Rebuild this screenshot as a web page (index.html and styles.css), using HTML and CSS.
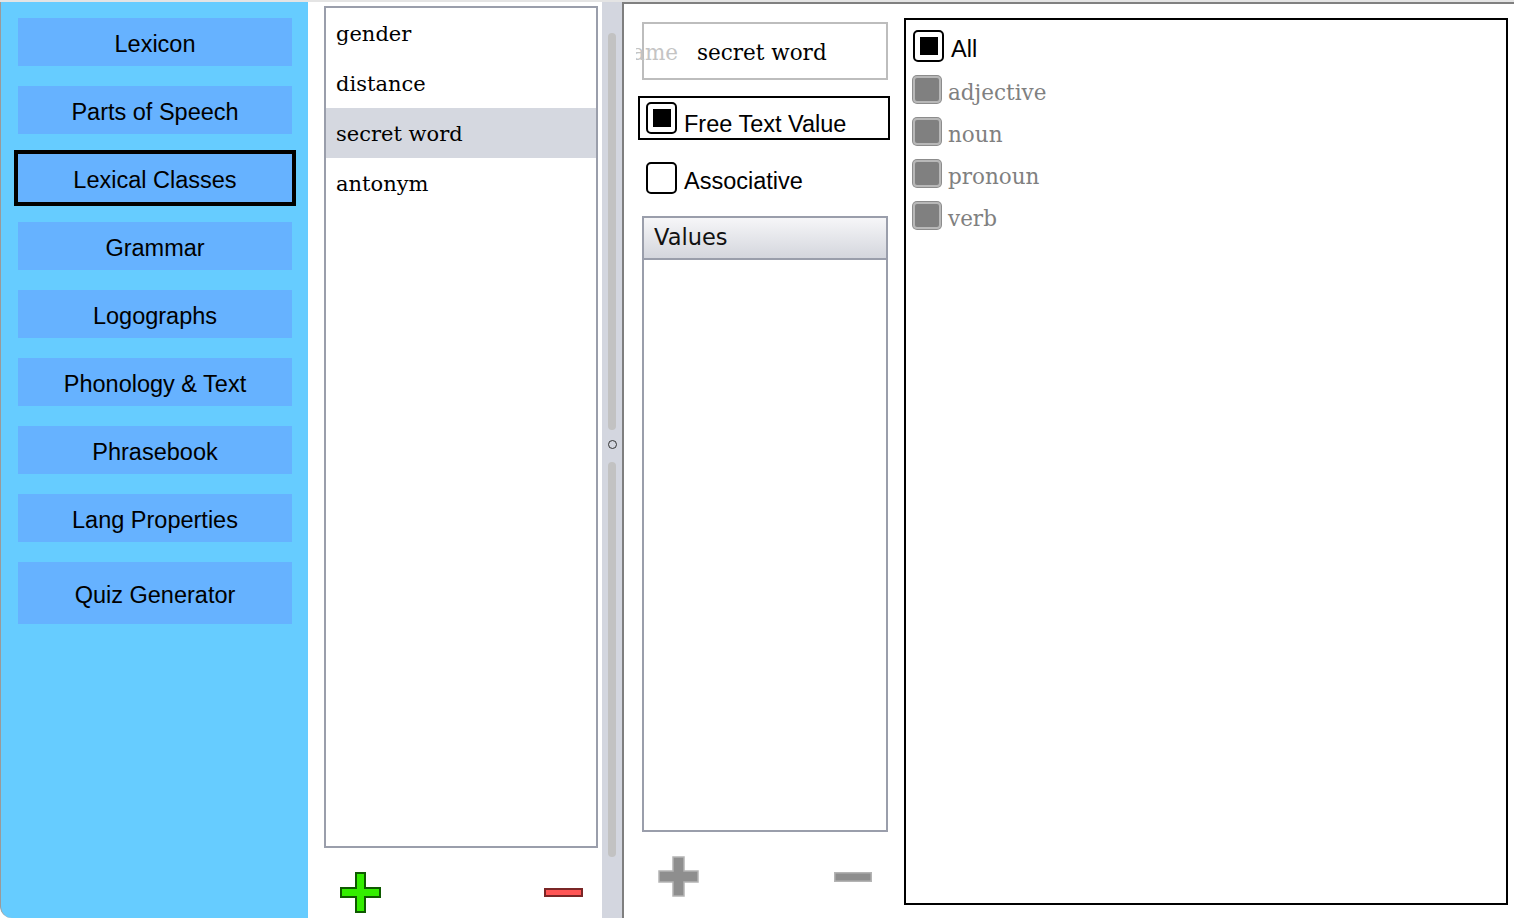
FILE: index.html
```html
<!DOCTYPE html>
<html>
<head>
<meta charset="utf-8">
<link rel="stylesheet" href="styles.css">
</head>
<body>
<div class="app">
  <nav class="sidebar">
    <div class="nav-btn">Lexicon</div>
    <div class="nav-btn">Parts of Speech</div>
    <div class="nav-btn active">Lexical Classes</div>
    <div class="nav-btn">Grammar</div>
    <div class="nav-btn">Logographs</div>
    <div class="nav-btn">Phonology &amp; Text</div>
    <div class="nav-btn">Phrasebook</div>
    <div class="nav-btn">Lang Properties</div>
    <div class="nav-btn tall">Quiz Generator</div>
  </nav>

  <section class="middle">
    <div class="class-col">
      <ul class="class-list">
        <li class="class-item">gender</li>
        <li class="class-item">distance</li>
        <li class="class-item selected">secret word</li>
        <li class="class-item">antonym</li>
      </ul>
      <div class="list-actions">
        <svg class="icon-plus" width="41" height="41" viewBox="0 0 41 41">
          <path d="M16 1 H25 V16 H40 V25 H25 V40 H16 V25 H1 V16 H16 Z" fill="#33ee00" stroke="#0e5a00" stroke-width="2"/>
        </svg>
        <svg class="icon-minus" width="39" height="9" viewBox="0 0 39 9">
          <rect x="1" y="1" width="37" height="7" fill="#ff5555" stroke="#7a2626" stroke-width="2"/>
        </svg>
      </div>
    </div>
    <div class="divider">
      <div class="thumb thumb-top"></div>
      <div class="grip"></div>
      <div class="thumb thumb-bottom"></div>
    </div>
  </section>

  <section class="detail">
    <div class="form-col">
      <div class="name-field">
        <span class="name-label"><span>Name</span></span>
        <span class="name-value">secret word</span>
      </div>
      <div class="check-row framed">
        <span class="checkbox checked"></span>
        <span class="check-label">Free Text Value</span>
      </div>
      <div class="check-row plain">
        <span class="checkbox"></span>
        <span class="check-label">Associative</span>
      </div>
      <div class="values-table">
        <div class="values-header">Values</div>
      </div>
      <div class="values-actions">
        <svg width="41" height="41" viewBox="0 0 41 41">
          <path d="M15 1 H26 V15 H40 V26 H26 V40 H15 V26 H1 V15 H15 Z" fill="#8e8e8e" stroke="#b4b4b4" stroke-width="1.5"/>
        </svg>
        <svg class="gray-minus" width="38" height="10" viewBox="0 0 38 10">
          <rect x="0.75" y="0.75" width="36.5" height="8.5" fill="#8e8e8e" stroke="#b4b4b4" stroke-width="1.5"/>
        </svg>
      </div>
    </div>
    <div class="pos-list">
      <div class="pos-row first">
        <span class="checkbox checked"></span>
        <span class="pos-all">All</span>
      </div>
      <div class="pos-row">
        <span class="checkbox disabled"></span>
        <span class="pos-name">adjective</span>
      </div>
      <div class="pos-row">
        <span class="checkbox disabled"></span>
        <span class="pos-name">noun</span>
      </div>
      <div class="pos-row">
        <span class="checkbox disabled"></span>
        <span class="pos-name">pronoun</span>
      </div>
      <div class="pos-row">
        <span class="checkbox disabled"></span>
        <span class="pos-name">verb</span>
      </div>
    </div>
  </section>
</div>
</body>
</html>
```

FILE: styles.css
```css
* {
  box-sizing: border-box;
}

html, body {
  margin: 0;
  padding: 0;
  background: #ffffff;
}

body {
  width: 1514px;
  height: 918px;
  overflow: hidden;
  font-family: "Liberation Sans", Arial, sans-serif;
}

.app {
  display: flex;
  height: 918px;
  border-top: 2px solid #e4e4e4;
}

/* ---------- sidebar ---------- */
.sidebar {
  width: 308px;
  flex: none;
  background: #66ccff;
  border-left: 1px solid #9a9a9a;
  border-bottom-left-radius: 12px;
  padding: 16px 0 0 17px;
  display: flex;
  flex-direction: column;
  gap: 20px;
}

.nav-btn {
  width: 274px;
  height: 48px;
  padding-top: 4px;
  background: #66b2ff;
  display: flex;
  align-items: center;
  justify-content: center;
  font-size: 23.5px;
  color: #000;
}

.nav-btn.active {
  outline: 4px solid #000;
}

.nav-btn.tall {
  height: 62px;
}

/* ---------- middle (class list) ---------- */
.middle {
  width: 316px;
  flex: none;
  display: flex;
  background: #fff;
}

.class-col {
  width: 294px;
  padding: 4px 4px 0 16px;
  display: flex;
  flex-direction: column;
}

.class-list {
  list-style: none;
  margin: 0;
  padding: 0;
  height: 842px;
  border: 2px solid #9a9eab;
}

.class-item {
  height: 50px;
  display: flex;
  align-items: center;
  padding: 2px 0 0 10px;
  font-family: "DejaVu Serif", serif;
  font-size: 21px;
  color: #000;
}

.class-item.selected {
  background: #d5d8e0;
}

.list-actions {
  display: flex;
  justify-content: space-between;
  align-items: flex-start;
  padding: 24px 15px 0 16px;
}

.icon-minus {
  margin-top: 16px;
}

.divider {
  width: 22px;
  background: #d3d6df;
  border-right: 2px solid #7f7f7f;
  display: flex;
  flex-direction: column;
  align-items: center;
}

.thumb {
  width: 8px;
  border-radius: 4px;
  background: #c2c2c2;
}

.thumb-top {
  margin-top: 31px;
  height: 397px;
}

.grip {
  width: 9px;
  height: 9px;
  border: 1.5px solid #333;
  border-radius: 50%;
  margin: 10px 0 13px;
}

.thumb-bottom {
  height: 395px;
}

/* ---------- detail panel ---------- */
.detail {
  flex: 1;
  display: flex;
  border-top: 2px solid #808080;
  background: #fff;
}

.form-col {
  width: 266px;
  padding: 18px 0 0 14px;
  display: flex;
  flex-direction: column;
}

.name-field {
  margin: 0 2px 0 4px;
  height: 58px;
  padding-top: 2px;
  border: 2px solid #bdbdbd;
  display: flex;
  align-items: center;
  font-family: "DejaVu Serif", serif;
  font-size: 21.5px;
}

.name-label {
  width: 42px;
  margin-left: -8px;
  overflow: hidden;
  display: flex;
  justify-content: flex-end;
  color: #c4c4c4;
  white-space: nowrap;
  flex: none;
}

.name-value {
  margin-left: 19px;
  color: #000;
}

.check-row {
  display: flex;
  align-items: center;
  gap: 7px;
  height: 44px;
  font-size: 23.5px;
}

.check-row.framed {
  margin-top: 16px;
  border: 2px solid #000;
  padding-left: 6px;
}

.check-row.framed .check-label {
  padding-top: 13px;
}

.check-row.plain {
  margin-top: 17px;
  height: 42px;
  padding-left: 8px;
}

.check-row.plain .check-label {
  padding-top: 7px;
}

.checkbox {
  width: 31px;
  height: 32px;
  border: 2px solid #000;
  border-radius: 5px;
  background: #fff;
  display: flex;
  align-items: center;
  justify-content: center;
  flex: none;
}

.checkbox.checked::after {
  content: "";
  width: 18px;
  height: 18px;
  background: #000;
}

.checkbox.disabled {
  width: 28px;
  height: 27px;
  border: 2px solid #b8b8b8;
  border-radius: 4px;
  background: #808080;
  box-shadow: 0 0 0 1px #8c8c8c;
}

.values-table {
  margin: 17px 2px 0 4px;
  height: 616px;
  border: 2px solid #9a9eab;
}

.values-header {
  height: 42px;
  border-bottom: 2px solid #9a9eab;
  background: linear-gradient(#f6f6f8, #d4d6dd);
  font-family: "DejaVu Sans", sans-serif;
  font-size: 22.5px;
  display: flex;
  align-items: center;
  padding: 0 0 2px 10px;
  color: #111;
}

.values-actions {
  display: flex;
  justify-content: space-between;
  align-items: flex-start;
  padding: 24px 18px 0 20px;
}

.gray-minus {
  margin-top: 16px;
}

.pos-list {
  margin: 14px 0 0 14px;
  width: 604px;
  height: 887px;
  border: 2px solid #000;
  padding: 4px 0 0 7px;
}

.pos-row {
  height: 42px;
  display: flex;
  align-items: center;
  gap: 7px;
}

.pos-row.first {
  height: 44px;
}

.pos-all {
  font-size: 23.5px;
  color: #000;
  padding-top: 6px;
}

.pos-name {
  font-family: "DejaVu Serif", serif;
  font-size: 21.5px;
  color: #808080;
  padding-top: 6px;
}
```
